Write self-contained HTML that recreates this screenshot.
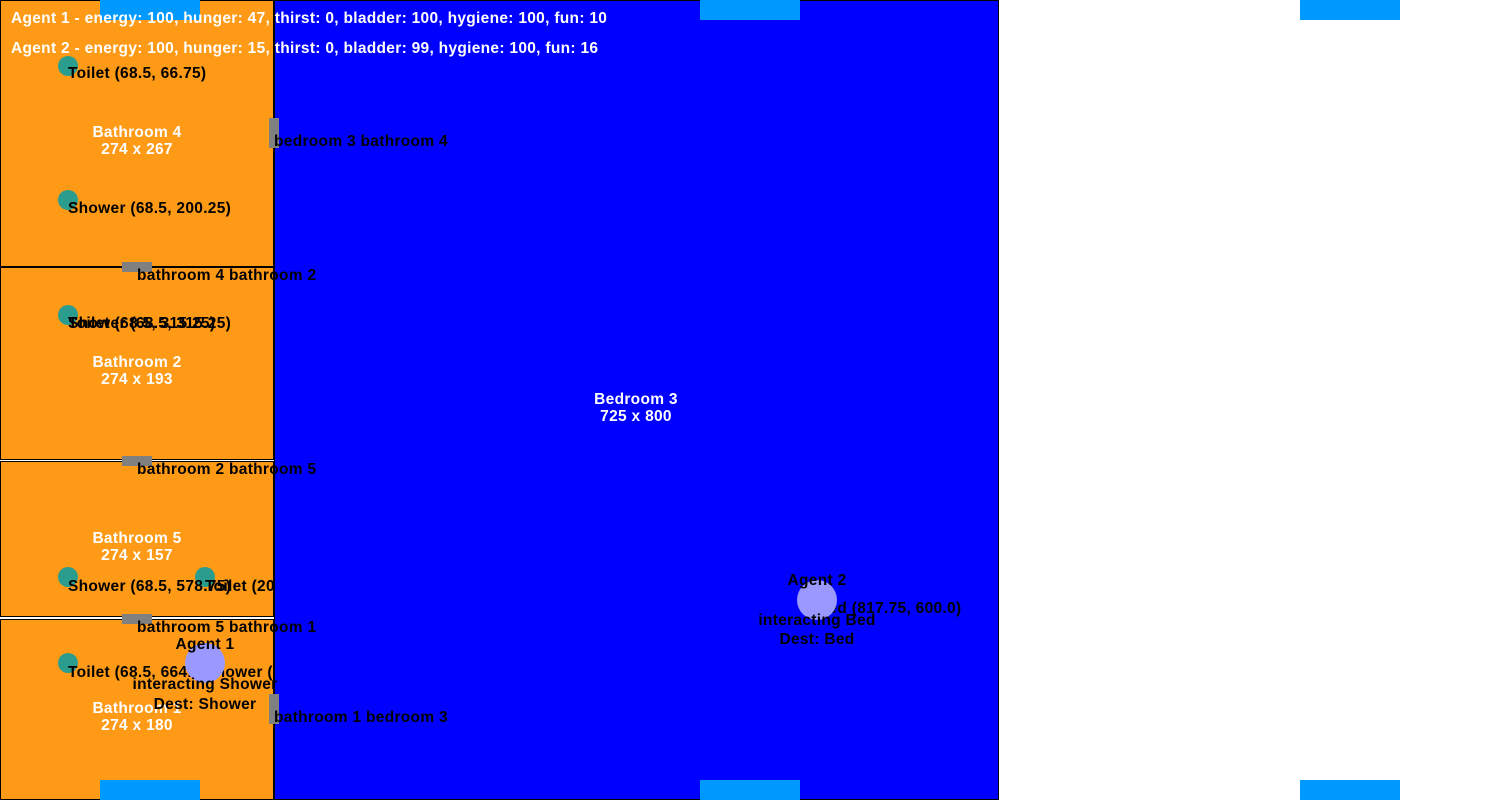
<!DOCTYPE html>
<html><head><meta charset="utf-8"><style>
html,body{margin:0;padding:0;background:#fff;width:1500px;height:800px;overflow:hidden}
svg text{font-family:"Liberation Sans",sans-serif;font-weight:bold;font-size:15.5px;letter-spacing:0.3px}
</style></head><body>
<svg width="1500" height="800" xmlns="http://www.w3.org/2000/svg">
<defs>
<clipPath id="b4"><rect x="0" y="0" width="274" height="267"/></clipPath>
<clipPath id="b2"><rect x="0" y="267" width="274" height="193"/></clipPath>
<clipPath id="b5"><rect x="0" y="461" width="274" height="157"/></clipPath>
<clipPath id="b1"><rect x="0" y="619" width="274" height="181"/></clipPath>
<clipPath id="bd"><rect x="274" y="0" width="725" height="800"/></clipPath>
</defs>
<rect x="0" y="0" width="1500" height="800" fill="#fff"/>
<g stroke="#000" stroke-width="1">
<rect x="274.5" y="0.5" width="724" height="799" fill="#0000ff"/>
<rect x="0.5" y="0.5" width="273" height="266" fill="#ff9a16"/>
<rect x="0.5" y="267.5" width="273" height="192" fill="#ff9a16"/>
<rect x="0.5" y="461.5" width="273" height="155" fill="#ff9a16"/>
<rect x="0.5" y="619.5" width="273" height="180" fill="#ff9a16"/>
</g>
<g fill="#0099ff">
<rect x="100" y="0" width="100" height="20"/><rect x="700" y="0" width="100" height="20"/><rect x="1300" y="0" width="100" height="20"/>
<rect x="100" y="780" width="100" height="20"/><rect x="700" y="780" width="100" height="20"/><rect x="1300" y="780" width="100" height="20"/>
</g>
<g fill="#808080">
<rect x="269" y="118" width="10" height="30"/>
<rect x="122" y="262" width="30" height="10"/>
<rect x="122" y="456" width="30" height="10"/>
<rect x="122" y="614" width="30" height="10"/>
<rect x="269" y="694" width="10" height="30"/>
</g>
<g fill="#2a9d8f">
<circle cx="68" cy="66" r="10"/><circle cx="68" cy="200" r="10"/><circle cx="68" cy="315" r="10"/>
<circle cx="68" cy="577" r="10"/><circle cx="205" cy="577" r="10"/><circle cx="68" cy="663" r="10"/>
</g>
<g fill="#fff" text-anchor="middle">
<text x="137" y="137">Bathroom 4</text><text x="137" y="154">274 x 267</text>
<text x="137" y="367">Bathroom 2</text><text x="137" y="384">274 x 193</text>
<text x="137" y="543">Bathroom 5</text><text x="137" y="560">274 x 157</text>
<text x="137" y="713">Bathroom 1</text><text x="137" y="730">274 x 180</text>
<text x="636" y="404">Bedroom 3</text><text x="636" y="421">725 x 800</text>
</g>
<g fill="#000">
<g clip-path="url(#b4)">
<text x="68" y="78">Toilet (68.5, 66.75)</text>
<text x="68" y="213">Shower (68.5, 200.25)</text>
</g>
<g clip-path="url(#b2)">
<text x="68" y="328">Toilet (68.5, 315.25)</text>
<text x="68" y="328">Shower (68.5, 315.25)</text>
</g>
<g clip-path="url(#b5)">
<text x="68" y="591">Shower (68.5, 578.75)</text>
<text x="205" y="591">Toilet (205.5, 578.75)</text>
</g>
<g clip-path="url(#b1)">
<text x="68" y="677">Toilet (68.5, 664.5)</text>
<text x="205" y="677">Shower (205.5, 664.5)</text>
</g>
<g clip-path="url(#bd)">
<text x="817" y="613">Bed (817.75, 600.0)</text>
</g>
<text x="274" y="146">bedroom 3 bathroom 4</text>
<text x="137" y="280">bathroom 4 bathroom 2</text>
<text x="137" y="474">bathroom 2 bathroom 5</text>
<text x="137" y="632">bathroom 5 bathroom 1</text>
<text x="274" y="722">bathroom 1 bedroom 3</text>
</g>
<circle cx="205" cy="663" r="20" fill="#9999ff"/>
<circle cx="817" cy="600" r="20" fill="#9999ff"/>
<g fill="#000" text-anchor="middle">
<text x="205" y="649">Agent 1</text>
<text x="205" y="689">interacting Shower</text>
<text x="205" y="709">Dest: Shower</text>
<text x="817" y="585">Agent 2</text>
<text x="817" y="625">interacting Bed</text>
<text x="817" y="644">Dest: Bed</text>
</g>
<g fill="#fff">
<text x="11" y="23">Agent 1 - energy: 100, hunger: 47, thirst: 0, bladder: 100, hygiene: 100, fun: 10</text>
<text x="11" y="53">Agent 2 - energy: 100, hunger: 15, thirst: 0, bladder: 99, hygiene: 100, fun: 16</text>
</g>
</svg>
</body></html>
